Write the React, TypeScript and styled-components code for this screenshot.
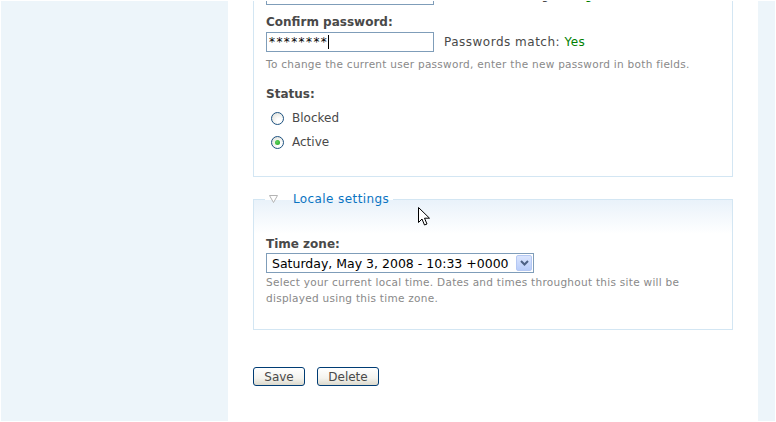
import { createGlobalStyle, styled } from "styled-components";

const GlobalStyle = createGlobalStyle`
  html, body {
    margin: 0;
    padding: 0;
    background: #fff;
  }
  body {
    font-family: "DejaVu Sans", Verdana, sans-serif;
    font-size: 12px;
    color: #494949;
  }
`;

const Page = styled.div`
  display: flex;
  height: 422px;
  width: 776px;
  box-sizing: border-box;
  padding: 1px;
  overflow: hidden;
`;

const Sidebar = styled.div`
  width: 227px;
  flex-shrink: 0;
  background: #edf5fa;
`;

const Main = styled.div`
  position: relative;
  width: 530px;
  flex-shrink: 0;
  padding-left: 25px;
  box-sizing: border-box;
  background: #fff;
  overflow: hidden;
`;

const RightStrip = styled.div`
  width: 17px;
  flex-shrink: 0;
  background: #edf5fa;
`;

const Fieldset = styled.fieldset<{ $gradient?: boolean }>`
  width: 480px;
  box-sizing: border-box;
  margin: 0;
  padding: 0 12px 0 12px;
  border: 1px solid #d3e6f3;
  min-width: 0;
  background: ${(p) =>
    p.$gradient ? "linear-gradient(#e9f2fa 0px, #ffffff 34px)" : "#fff"};
`;

const FirstFieldset = styled(Fieldset)`
  border-top: none;
  margin-top: -16px;
  padding-bottom: 22px;
`;

const SecondFieldset = styled(Fieldset)`
  margin-top: 14px;
  padding-bottom: 23px;
`;

const Legend = styled.legend`
  padding: 0 4px 0 4px;
  margin-left: -1px;
  line-height: 16px;
`;

const LegendLink = styled.a`
  display: inline-flex;
  align-items: center;
  gap: 15px;
  color: #0a74c2;
  text-decoration: none;
  font-size: 12px;
  letter-spacing: 0.4px;
  cursor: pointer;
`;

const Row = styled.div<{ $mt?: number }>`
  display: flex;
  align-items: center;
  gap: 10px;
  margin-top: ${(p) => p.$mt ?? 0}px;
`;

const TextBox = styled.div`
  width: 168px;
  height: 20px;
  box-sizing: border-box;
  border: 1px solid #7f9db9;
  background: #fff;
  display: flex;
  align-items: center;
  padding-left: 2px;
  font-size: 12px;
  color: #000;
  letter-spacing: 1.4px;
`;

const Caret = styled.span`
  display: inline-block;
  width: 1px;
  height: 14px;
  background: #000;
`;

const Note = styled.span`
  font-size: 12px;
  color: #494949;
  letter-spacing: 0.5px;
`;

const Good = styled.span`
  color: #008000;
`;

const Label = styled.div<{ $mt?: number }>`
  font-weight: bold;
  line-height: 16px;
  color: #494949;
  margin-top: ${(p) => p.$mt ?? 0}px;
`;

const Description = styled.div<{ $mt?: number; $lh?: number }>`
  font-size: 10.5px;
  color: #898989;
  line-height: ${(p) => p.$lh ?? 14}px;
  margin-top: ${(p) => p.$mt ?? 0}px;
  letter-spacing: 0.28px;
`;

const RadioList = styled.div`
  margin-top: 4px;
  padding-left: 5px;
`;

const RadioRow = styled.label`
  display: flex;
  align-items: center;
  gap: 8px;
  height: 24px;
  color: #494949;
`;

const RadioCircle = styled.span<{ $checked?: boolean }>`
  width: 11px;
  height: 11px;
  border-radius: 50%;
  border: 1px solid #1c5180;
  background: radial-gradient(circle at 65% 70%, #ffffff 20%, #dcdcd4 100%);
  display: flex;
  align-items: center;
  justify-content: center;
  &::after {
    content: "";
    display: ${(p) => (p.$checked ? "block" : "none")};
    width: 5px;
    height: 5px;
    border-radius: 50%;
    background: radial-gradient(circle at 40% 40%, #5fd35f, #21a121);
  }
`;

const Select = styled.div`
  margin-top: 1px;
  width: 268px;
  height: 20px;
  box-sizing: border-box;
  border: 1px solid #7f9db9;
  display: flex;
  align-items: center;
  justify-content: space-between;
  padding: 1px 1px 1px 5px;
  font-size: 12.5px;
  color: #000;
  background: #fff;
`;

const SelectArrow = styled.span`
  width: 16px;
  height: 16px;
  box-sizing: border-box;
  border: 1px solid #b5c8f3;
  border-radius: 2px;
  background: linear-gradient(#dbe5fd, #b9cdfa);
  display: flex;
  align-items: center;
  justify-content: center;
`;

const Buttons = styled.div`
  display: flex;
  gap: 12px;
  margin-top: 37px;
`;

const Button = styled.button<{ $w: number }>`
  width: ${(p) => p.$w}px;
  height: 19px;
  box-sizing: border-box;
  border: 1px solid #003c74;
  border-radius: 3px;
  background: linear-gradient(#ffffff 0%, #f4f3ee 60%, #dcd9cc 100%);
  font-family: "DejaVu Sans", Verdana, sans-serif;
  font-size: 12px;
  color: #494949;
  padding: 0;
  line-height: 16px;
`;

const Pointer = styled.svg`
  position: absolute;
  left: 190px;
  top: 206px;
`;

export default function App() {
  return (
    <>
      <GlobalStyle />
      <Page>
        <Sidebar />
        <Main>
          <FirstFieldset>
            <Row>
              <TextBox />
              <Note>
                Password strength: <Good>High</Good>
              </Note>
            </Row>
            <Label $mt={9}>Confirm password:</Label>
            <Row $mt={2}>
              <TextBox>
                ********<Caret />
              </TextBox>
              <Note>
                Passwords match: <Good>Yes</Good>
              </Note>
            </Row>
            <Description $mt={5}>
              To change the current user password, enter the new password in both fields.
            </Description>
            <Label $mt={15}>Status:</Label>
            <RadioList>
              <RadioRow>
                <RadioCircle />
                Blocked
              </RadioRow>
              <RadioRow>
                <RadioCircle $checked />
                Active
              </RadioRow>
            </RadioList>
          </FirstFieldset>

          <SecondFieldset $gradient>
            <Legend>
              <LegendLink>
                <svg width="9" height="8" viewBox="0 0 9 8">
                  <path d="M0.5 0.5 H8.5 L4.5 7.5 Z" fill="#fff" stroke="#b4b4b4" strokeWidth="1" />
                </svg>
                Locale settings
              </LegendLink>
            </Legend>
            <Label $mt={29}>Time zone:</Label>
            <Select>
              Saturday, May 3, 2008 - 10:33 +0000
              <SelectArrow>
                <svg width="9" height="6" viewBox="0 0 9 6">
                  <path d="M1 1 L4.5 4.5 L8 1" fill="none" stroke="#4d6185" strokeWidth="2" />
                </svg>
              </SelectArrow>
            </Select>
            <Description $mt={1} $lh={16}>
              Select your current local time. Dates and times throughout this site will be
              <br />
              displayed using this time zone.
            </Description>
          </SecondFieldset>

          <Buttons>
            <Button $w={52}>Save</Button>
            <Button $w={62}>Delete</Button>
          </Buttons>

          <Pointer width="13" height="20" viewBox="0 0 13 20">
            <path
              d="M0.5 0.5 V15.5 L4 12 L6.5 18 L9 17 L6.5 11.2 H11.5 Z"
              fill="#fff"
              stroke="#000"
              strokeWidth="1"
              strokeLinejoin="round"
            />
          </Pointer>
        </Main>
        <RightStrip />
      </Page>
    </>
  );
}
